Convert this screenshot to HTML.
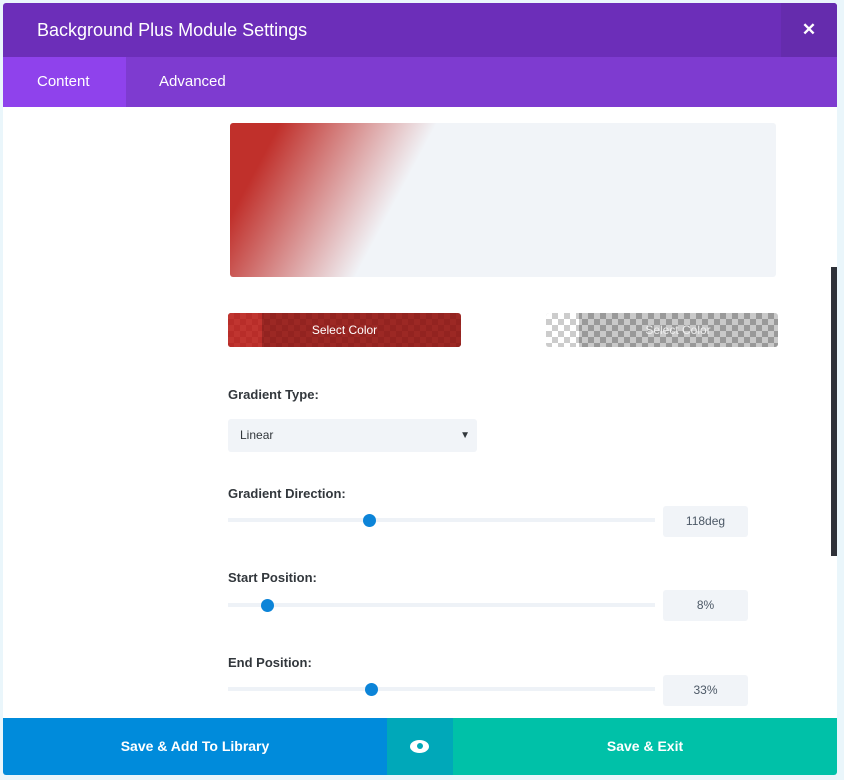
<!DOCTYPE html>
<html><head><meta charset="utf-8"><style>
*{margin:0;padding:0;box-sizing:border-box}
body{width:844px;height:780px;background:#eaf6fb;position:relative;overflow:hidden;font-family:"Liberation Sans",sans-serif}
.modal{position:absolute;left:3px;top:3px;width:834px;height:772px;background:#fff;overflow:hidden;border-radius:3px}
.hdr{position:absolute;left:0;top:0;width:834px;height:54px;background:#6c2eb9}
.hdr .t{position:absolute;left:34px;top:17px;color:#fff;font-size:18px}
.hdr .x{position:absolute;right:0;top:0;width:56px;height:54px;background:#652cad;color:#fff;font-size:17px;font-weight:bold;text-align:center;line-height:54px}
.tabs{position:absolute;left:0;top:54px;width:834px;height:50px;background:#7e3bd0}
.tab{position:absolute;top:0;height:50px;line-height:50px;color:#fff;font-size:15px}
.abs{position:absolute}
.lbl{position:absolute;left:225px;font-size:13px;font-weight:bold;color:#32373c}
.track{position:absolute;left:225px;width:427px;height:4px;background:#eef2f7}
.knob{position:absolute;width:13px;height:13px;border-radius:50%;background:#0c84d8}
.val{position:absolute;left:660px;width:85px;height:31px;background:#f1f4f8;border-radius:3px;font-size:12px;color:#4c5866;text-align:center;line-height:31px}
.chk{background-size:12px 12px;background-position:0 0,6px 6px}
</style></head><body>
<div class="modal">
<div class="hdr"><div class="t">Background Plus Module Settings</div><div class="x">✕</div></div>
<div class="tabs">
<div class="tab" style="left:0;width:123px;background:#8f42ec;padding-left:34px">Content</div>
<div class="tab" style="left:156px">Advanced</div>
</div>
<div class="abs" style="left:227px;top:120px;width:546px;height:154px;border-radius:3px;background:linear-gradient(118deg,#c0302b 8%,#f1f4f8 33%)"></div>

<div class="abs" style="left:225px;top:310px;width:233px;height:34px;border-radius:3px;overflow:hidden;background:#9c2824">
<div class="abs chk" style="left:0;top:0;width:233px;height:34px;background-image:linear-gradient(45deg,#932320 25%,transparent 25%,transparent 75%,#932320 75%),linear-gradient(45deg,#932320 25%,transparent 25%,transparent 75%,#932320 75%)"></div>
<div class="abs chk" style="left:0;top:0;width:34px;height:34px;background-color:#c03530;background-image:linear-gradient(45deg,#b82d29 25%,transparent 25%,transparent 75%,#b82d29 75%),linear-gradient(45deg,#b82d29 25%,transparent 25%,transparent 75%,#b82d29 75%)"></div>
<div class="abs" style="left:0;top:0;width:233px;height:34px;line-height:34px;text-align:center;color:#fff;font-size:12px">Select Color</div>
</div>
<div class="abs" style="left:543px;top:310px;width:232px;height:34px;border-radius:3px;overflow:hidden;background-color:#c9c9c9">
<div class="abs chk" style="left:0;top:0;width:232px;height:34px;background-image:linear-gradient(45deg,#999 25%,transparent 25%,transparent 75%,#999 75%),linear-gradient(45deg,#999 25%,transparent 25%,transparent 75%,#999 75%)"></div>
<div class="abs chk" style="left:0;top:0;width:33px;height:34px;background-color:#fff;background-image:linear-gradient(45deg,#ccc 25%,transparent 25%,transparent 75%,#ccc 75%),linear-gradient(45deg,#ccc 25%,transparent 25%,transparent 75%,#ccc 75%)"></div>
<div class="abs" style="left:0;top:0;width:264px;height:34px;line-height:34px;text-align:center;color:#eee;font-size:12px">Select Color</div>
</div>

<div class="lbl" style="top:384px">Gradient Type:</div>
<div class="abs" style="left:225px;top:416px;width:249px;height:33px;background:#f1f4f8;border-radius:3px;font-size:12px;color:#32373c;line-height:33px;padding-left:12px">Linear<span style="position:absolute;right:7px;font-size:10px">▼</span></div>

<div class="lbl" style="top:483px">Gradient Direction:</div>
<div class="track" style="top:515px"></div>
<div class="knob" style="left:360px;top:511px"></div>
<div class="val" style="top:503px">118deg</div>

<div class="lbl" style="top:567px">Start Position:</div>
<div class="track" style="top:600px"></div>
<div class="knob" style="left:258px;top:596px"></div>
<div class="val" style="top:587px">8%</div>

<div class="lbl" style="top:652px">End Position:</div>
<div class="track" style="top:684px"></div>
<div class="knob" style="left:362px;top:680px"></div>
<div class="val" style="top:672px">33%</div>

<div class="abs" style="left:828px;top:264px;width:6px;height:289px;background:#2e3138"></div>

<div class="abs" style="left:0;top:715px;width:384px;height:57px;background:#008bdb;color:#fff;font-weight:bold;font-size:14px;text-align:center;line-height:57px">Save &amp; Add To Library</div>
<div class="abs" style="left:384px;top:715px;width:66px;height:57px;background:#00a8b9">
<div class="abs" style="left:23px;top:22px;width:19px;height:13px;border-radius:50%;background:#fff"></div>
<div class="abs" style="left:30px;top:25px;width:6px;height:6px;border-radius:50%;background:#00a8b9"></div>
</div>
<div class="abs" style="left:450px;top:715px;width:384px;height:57px;background:#00c1a8;color:#fff;font-weight:bold;font-size:14px;text-align:center;line-height:57px">Save &amp; Exit</div>
</div>
</body></html>
